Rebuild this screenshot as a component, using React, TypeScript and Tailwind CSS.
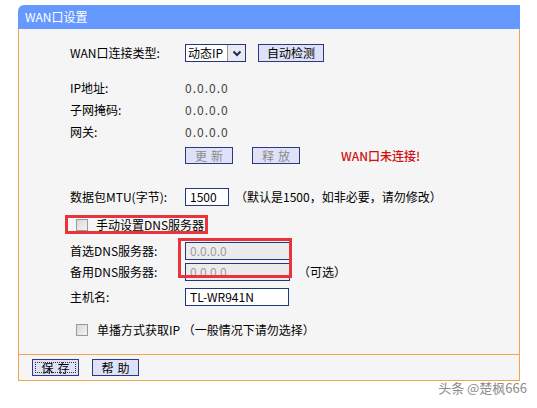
import React from 'react';

const labelCls = "w-[115px] shrink-0";
const btnCls = "h-[17px] flex items-center justify-center border border-[#2b3a80] bg-[#dfe1f7] leading-none whitespace-nowrap";

const Checkbox = () => (
  <span className="inline-block shrink-0 w-[12px] h-[12px] border border-[#9a9a9a] bg-gradient-to-br from-[#d8d8d8] to-[#f4f4f4]" />
);

const TextBox: React.FC<{ value: string; w: string; disabled?: boolean }> = ({ value, w, disabled }) => (
  <div
    className={`${w} h-[18px] border border-[#27357a] flex items-center pl-[4px] leading-none ${
      disabled ? "bg-[#ececec] text-[#9c9c9c]" : "bg-white text-black"
    }`}
  >
    {value}
  </div>
);

export default function App() {
  return (
    <div className="w-[537px] h-[408px] bg-white relative font-['Noto_Sans_CJK_SC',sans-serif] text-[12px] text-black">
      <div className="pt-[5px] pl-[18px]">
        <div className="w-[502px]">
          {/* 标题栏 */}
          <div className="h-[24px] bg-[#6699ff] rounded-tl-[6px] flex items-center pl-[7px] text-white leading-none">
            WAN口设置
          </div>

          {/* 主体 */}
          <div className="border-x border-[#f6a24e] bg-[#f5f5f5] pt-[15px] pb-[15px] pl-[51px]">
            <div className="h-[18px] flex items-center">
              <span className={labelCls}>WAN口连接类型:</span>
              <div className="w-[61px] h-[18px] border border-[#27357a] bg-white flex items-stretch">
                <span className="flex-1 flex items-center pl-[2px] leading-none">动态IP</span>
                <span className="w-[18px] border-l border-[#9a9a9a] bg-[#e9e9ef] flex items-center justify-center">
                  <svg width="10" height="7" viewBox="0 0 10 7">
                    <polyline points="1.5,1.5 5,5 8.5,1.5" fill="none" stroke="#1d2a5c" strokeWidth="2" />
                  </svg>
                </span>
              </div>
              <div className={`${btnCls} ml-[12px] w-[66px] h-[18px]`}>自动检测</div>
            </div>

            <div className="mt-[15px]">
              {[
                ["IP地址:", "0.0.0.0"],
                ["子网掩码:", "0.0.0.0"],
                ["网关:", "0.0.0.0"],
              ].map(([k, v]) => (
                <div key={k} className="h-[22px] flex items-center">
                  <span className={labelCls}>{k}</span>
                  <span className="text-[#444] tracking-[1px]">{v}</span>
                </div>
              ))}
            </div>

            <div className="mt-[4px] h-[17px] flex items-center">
              <span className="w-[115px] shrink-0" />
              <div className={`${btnCls} w-[48px] text-[#8a8a8a] tracking-[4px] pl-[4px]`}>更新</div>
              <div className={`${btnCls} w-[48px] ml-[19px] text-[#8a8a8a] tracking-[4px] pl-[4px]`}>释放</div>
              <span className="ml-[41px] text-[#d01010] font-medium">WAN口未连接!</span>
            </div>

            <div className="mt-[24px] h-[18px] flex items-center">
              <span className={labelCls}>数据包MTU(字节):</span>
              <TextBox value="1500" w="w-[44px]" />
              <span className="ml-[6px]">（默认是1500，如非必要，请勿修改）</span>
            </div>

            <div className="mt-[9px] -ml-[5px] w-fit h-[19px] border-[3px] border-[#e8343a] flex items-center pl-[8px] pr-[1px] whitespace-nowrap">
              <Checkbox />
              <span className="ml-[8px] leading-none">手动设置DNS服务器</span>
            </div>

            <div className="mt-[6px] relative">
              <div className="h-[21px] flex items-center">
                <span className={labelCls}>首选DNS服务器:</span>
                <TextBox value="0.0.0.0" w="w-[105px]" disabled />
              </div>
              <div className="h-[21px] flex items-center">
                <span className={labelCls}>备用DNS服务器:</span>
                <TextBox value="0.0.0.0" w="w-[105px]" disabled />
                <span className="ml-[8px]">（可选）</span>
              </div>
              <div className="absolute left-[108px] top-[-2px] w-[114px] h-[40px] border-[3px] border-[#e8343a]" />
            </div>

            <div className="mt-[6px] h-[18px] flex items-center">
              <span className={labelCls}>主机名:</span>
              <TextBox value="TL-WR941N" w="w-[104px]" />
            </div>

            <div className="mt-[15px] h-[18px] flex items-center pl-[6px] whitespace-nowrap">
              <Checkbox />
              <span className="ml-[9px]">单播方式获取IP （一般情况下请勿选择）</span>
            </div>
          </div>

          {/* 底部按钮 */}
          <div className="border border-[#f6a24e] bg-[#f5f5f5] h-[27px] pl-[13px] pt-[4px] flex gap-[13px]">
            <div className={`${btnCls} w-[47px] p-[2px] bg-[#d3e6f7]`}>
              <span className="w-full h-full border border-dotted border-[#333] flex items-center justify-center tracking-[4px] pl-[4px]">
                保存
              </span>
            </div>
            <div className={`${btnCls} w-[47px] tracking-[4px] pl-[4px]`}>帮助</div>
          </div>
        </div>
      </div>

      <div className="absolute right-[10px] top-[380px] text-[13px] text-[#8c8c8c] leading-[16px]">
        头条 @楚枫666
      </div>
    </div>
  );
}
